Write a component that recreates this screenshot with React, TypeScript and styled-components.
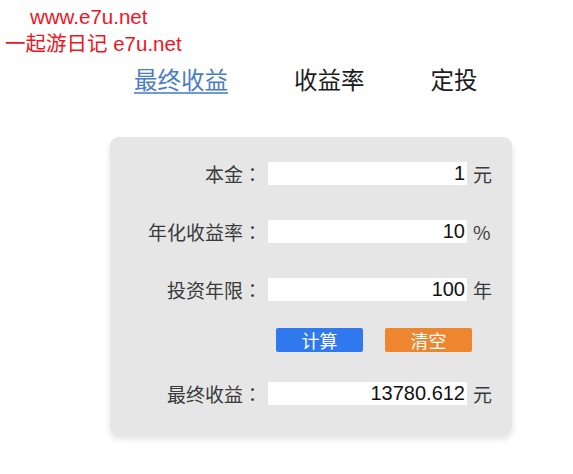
import React from "react";
import styled, { createGlobalStyle } from "styled-components";

const Global = createGlobalStyle`
  html, body { margin: 0; padding: 0; background: #ffffff; }
  body { font-family: "Liberation Sans", "Noto Sans CJK SC", sans-serif; }
`;

const Page = styled.div`
  width: 573px;
  height: 474px;
  background: #fff;
  overflow: hidden;
`;

const Watermark = styled.div<{ $indent: number }>`
  color: #f0141e;
  font-size: 20.5px;
  line-height: 27px;
  padding-left: ${(p) => p.$indent}px;
  font-family: "Liberation Sans", "Noto Sans CJK SC", sans-serif;
`;

const Marks = styled.div`
  padding-top: 3px;
`;

const Tabs = styled.div`
  display: flex;
  gap: 66px;
  padding-left: 134px;
  margin-top: 10px;
`;

const Tab = styled.div<{ $active?: boolean }>`
  font-size: 23.5px;
  line-height: 24px;
  font-family: "Noto Sans CJK SC", sans-serif;
  color: ${(p) => (p.$active ? "#4a7cc6" : "#1c1c1c")};
  padding-bottom: 1px;
  border-bottom: 2px solid ${(p) => (p.$active ? "#6f9ad6" : "transparent")};
`;

const Card = styled.div`
  margin: 43px 0 0 110px;
  width: 402px;
  box-sizing: border-box;
  background: #e6e6e6;
  border-radius: 9px;
  box-shadow: 0 4px 6px rgba(0, 0, 0, 0.12);
  padding: 25px 0 30px;
  display: flex;
  flex-direction: column;
`;

const Row = styled.div<{ $gap: number }>`
  display: grid;
  grid-template-columns: 152px 199px auto;
  column-gap: 6px;
  align-items: center;
  height: 23px;
  margin-top: ${(p) => p.$gap}px;
`;

const Label = styled.div`
  text-align: right;
  font-size: 19px;
  line-height: 23px;
  color: #3a3a3a;
  font-family: "Noto Sans CJK SC", sans-serif;
  white-space: nowrap;
`;

const Colon = styled.span`
  font-family: "Noto Sans CJK TC", sans-serif;
`;

const Field = styled.div`
  height: 23px;
  background: #fff;
  display: flex;
  align-items: center;
  justify-content: flex-end;
  padding-right: 2px;
  font-size: 20px;
  color: #111;
  font-family: "Liberation Sans", "Noto Sans CJK SC", sans-serif;
`;

const Unit = styled.div`
  font-size: 19px;
  line-height: 23px;
  color: #3a3a3a;
  font-family: "Noto Sans CJK SC", sans-serif;
`;

const Buttons = styled.div`
  display: flex;
  gap: 22px;
  margin: 27px 0 0 166px;
`;

const Button = styled.div<{ $color: string }>`
  width: 87px;
  height: 24px;
  background: ${(p) => p.$color};
  color: #fff;
  border-radius: 2px;
  font-size: 18px;
  font-family: "Noto Sans CJK SC", sans-serif;
  display: flex;
  align-items: center;
  justify-content: center;
  line-height: 1;
`;

const rows = [
  { label: "本金", value: "1", unit: "元" },
  { label: "年化收益率", value: "10", unit: "%" },
  { label: "投资年限", value: "100", unit: "年" },
];

export default function App() {
  return (
    <Page>
      <Global />
      <Marks>
        <Watermark $indent={30}>www.e7u.net</Watermark>
        <Watermark $indent={5}>一起游日记 e7u.net</Watermark>
      </Marks>
      <Tabs>
        <Tab $active>最终收益</Tab>
        <Tab>收益率</Tab>
        <Tab>定投</Tab>
      </Tabs>
      <Card>
        {rows.map((r, i) => (
          <Row key={r.label} $gap={i === 0 ? 0 : 35}>
            <Label>
              {r.label}
              <Colon>：</Colon>
            </Label>
            <Field>{r.value}</Field>
            <Unit>{r.unit}</Unit>
          </Row>
        ))}
        <Buttons>
          <Button $color="#2f78ee">计算</Button>
          <Button $color="#ee8630">清空</Button>
        </Buttons>
        <Row $gap={30}>
          <Label>
            最终收益
            <Colon>：</Colon>
          </Label>
          <Field>13780.612</Field>
          <Unit>元</Unit>
        </Row>
      </Card>
    </Page>
  );
}
